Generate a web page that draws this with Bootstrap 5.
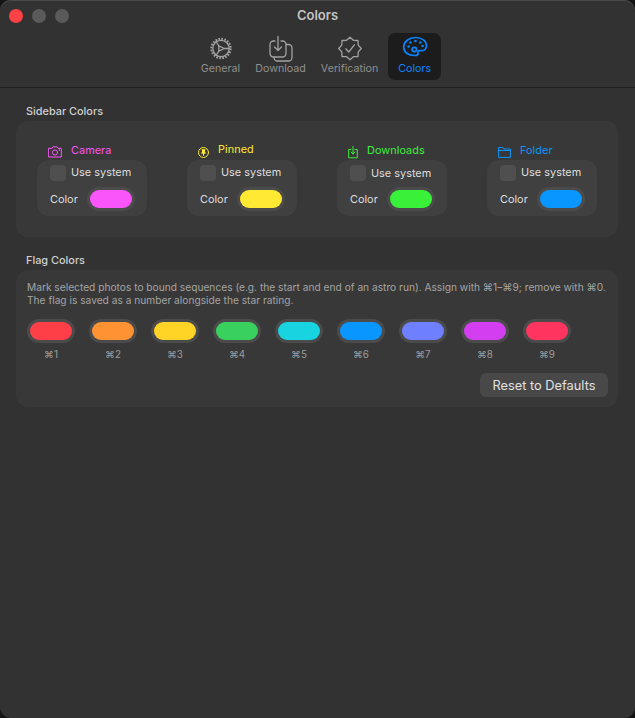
<!DOCTYPE html>
<html lang="en">
<head>
<meta charset="utf-8">
<title>Colors</title>
<link href="https://cdn.jsdelivr.net/npm/bootstrap@5.3.0/dist/css/bootstrap.min.css" rel="stylesheet">
<style>
html,body{height:100%;margin:0;background:#141414;}
body{font-family:"Inter","DejaVu Sans",sans-serif;color:#dcdcdc;overflow:hidden;}
.win{height:718px;background:#323232;border-radius:11px;overflow:hidden;box-shadow:inset 0 1px 0 #4a4a4a;}
.titlebar{display:grid;grid-template-columns:1fr auto 1fr;align-items:center;height:31px;padding:1px 9px 0;}
.lights{gap:9px;}
.light{width:14px;height:14px;border-radius:50%;background:#5a5a5a;}
.light-close{background:#fe4246;}
.win-title{font-size:13px;font-weight:600;color:#c4c4c4;}
.toolbar{height:57px;padding-top:2px;border-bottom:1px solid #212121;gap:1px;}
.tab-item{height:47px;padding:0 7px;font-size:10.7px;color:#8f8f8f;white-space:nowrap;}
.tab-item svg{display:block;height:27px;width:30px;margin:2px 0 -1px;fill:none;stroke:#a2a2a2;stroke-width:1.3;stroke-linecap:round;stroke-linejoin:round;}
.tab-on{background:#1c1c1c;border-radius:7px;padding:0 10px;margin-left:2px;color:#0a84ff;}
.tab-on svg{stroke:#0a84ff;stroke-width:1.7;}
.content-area{padding:0 17px 0 16px;}
.sect-title{font-size:10.9px;font-weight:500;color:#d0d0d0;padding-left:10px;line-height:15px;}
.first-head{margin-top:16px;}
.panel{background:#383838;border-radius:12px;}
.panel-side{margin-top:2px;height:116px;padding:20px 0 0 21px;gap:40px;}
.side-col{width:110px;}
.side-head{height:19px;padding:2px 0 0 11px;gap:9px;font-size:10.8px;letter-spacing:.1px;}
.side-head svg{height:14px;fill:none;stroke:currentColor;stroke-width:1;flex:none;stroke-linecap:round;stroke-linejoin:round;}
.icon-cam{width:14px;}
.icon-pin{width:11px;}
.icon-dl{width:10px;}
.icon-folder{width:13px;}
.lift{padding-bottom:2px;}
.side-box{background:#404040;border-radius:12px;height:56px;padding:5px 13px 0;font-size:10.9px;color:#dedede;}
.use-row{gap:5px;height:16px;line-height:14px;}
.use-word{padding-bottom:2px;}
.use-word-low{padding-bottom:0;}
.form-check-input.chk{width:16px;height:16px;margin:0;background-color:#4f4f4f;border:0;border-radius:4px;flex:none;}
.color-row{margin-top:6px;gap:9px;}
.color-word{padding-top:1px;}
.swatch{display:block;width:48px;height:24px;border-radius:12px;background:#4b4b4b;padding:3px;flex:none;}
.swatch>span{display:block;width:100%;height:100%;border-radius:9px;}
.panel-flag{margin-top:2px;height:137px;padding:11px 10px 0 11px;}
.flag-note{font-size:10.2px;line-height:13px;color:#a4a4a4;margin:0;white-space:nowrap;}
.flag-row{margin-top:12px;gap:14px;}
.flag-item{width:48px;}
.flag-key{font-size:9.8px;line-height:12px;color:#9c9c9c;margin-top:6px;}
.reset{background:#484848;border:0;color:#e2e2e2;font-size:12.8px;line-height:16px;width:128px;height:24px;padding:1px 0 0;border-radius:6px;font-weight:400;}
.reset-row{margin-top:12px;}
.second-head{margin-top:16px;}
</style>
</head>
<body>
<div class="win">
  <div class="titlebar">
    <div class="d-flex lights"><span class="light light-close"></span><span class="light"></span><span class="light"></span></div>
    <div class="win-title">Colors</div>
    <div></div>
  </div>
  <div class="toolbar d-flex justify-content-center align-items-start">
    <div class="tab-item d-flex flex-column align-items-center">
      <svg viewBox="0 0 30 27"><circle cx="15" cy="13.500" r="8.200"/><circle cx="15" cy="13.500" r="9.600" stroke-width="2.200" stroke-dasharray="1.600 1.420" stroke-linecap="butt"/><path d="M12.800 10.800 18.300 13.500 12.800 16.200ZM18.300 13.500H23.200M12.800 10.800 10 6.500M12.800 16.200 10 20.500"/></svg>
      <span>General</span>
    </div>
    <div class="tab-item d-flex flex-column align-items-center">
      <svg viewBox="0 0 30 27"><path d="M9 6H7.500A3.500 3.500 0 0 0 4 9.500V18.500A3.500 3.500 0 0 0 7.500 22H16.500A3.500 3.500 0 0 0 20 18.500V9.500A3.500 3.500 0 0 0 16.500 6H15"/><path d="M12 1.500V15.500M8.500 12 12 15.500 15.500 12"/><path d="M20 9.500H22.500A3.500 3.500 0 0 1 26 13V22.500A3.500 3.500 0 0 1 22.500 26H11.500A3.500 3.500 0 0 1 8 22.500V22"/></svg>
      <span>Download</span>
    </div>
    <div class="tab-item d-flex flex-column align-items-center">
      <svg viewBox="0 0 30 27"><path d="M15 2.200 18.410 5.280 23 5.500 23.220 10.090 26.300 13.500 23.220 16.910 23 21.500 18.410 21.720 15 24.800 11.590 21.720 7 21.500 6.780 16.910 3.700 13.500 6.780 10.090 7 5.500 11.590 5.280Z"/><path d="M10.800 13.700 13.800 17 19.400 9.800"/></svg>
      <span>Verification</span>
    </div>
    <div class="tab-item tab-on d-flex flex-column align-items-center">
      <svg viewBox="0 0 30 27"><path d="M15.500 2.500C22 2.500 26.500 6 26.500 10.700 26.500 14.200 24 16 21 15.600 18.500 15.300 17.500 16.300 18 17.700 18.700 19.500 17.500 20.500 14.500 20.500 8 20.500 3.700 17.300 3.700 12 3.700 6.700 9 2.500 15.500 2.500Z"/><circle cx="14.300" cy="14.500" r="2.200"/><circle cx="8.600" cy="11.500" r="1.300" fill="#0a84ff" stroke="none"/><circle cx="10.500" cy="7.500" r="1.300" fill="#0a84ff" stroke="none"/><circle cx="15.500" cy="6" r="1.300" fill="#0a84ff" stroke="none"/><circle cx="20.300" cy="7.500" r="1.300" fill="#0a84ff" stroke="none"/><circle cx="22.600" cy="11" r="1.300" fill="#0a84ff" stroke="none"/></svg>
      <span>Colors</span>
    </div>
  </div>
  <div class="content-area">
    <div class="sect-title first-head">Sidebar Colors</div>
    <div class="panel panel-side d-flex">
      <div class="side-col">
        <div class="side-head d-flex align-items-center" style="color:#fa55fa">
          <svg class="icon-cam" viewBox="0 0 14 14"><path d="M.7 3.300H4L5 1.800H9L10 3.300H13.300V12H.7Z"/><circle cx="7" cy="7.500" r="2.600"/><circle cx="11.200" cy="5" r=".3"/></svg>
          <span>Camera</span>
        </div>
        <div class="side-box">
          <label class="use-row d-flex align-items-center"><input class="form-check-input chk" type="checkbox"><span class="use-word">Use system</span></label>
          <div class="color-row d-flex align-items-center"><span class="color-word">Color</span><span class="swatch"><span style="background:#fa55fa"></span></span></div>
        </div>
      </div>
      <div class="side-col">
        <div class="side-head d-flex align-items-center" style="color:#ffe933">
          <svg class="icon-pin" viewBox="0 0 11 14"><circle cx="5.500" cy="7.500" r="5"/><path d="M4 4.800H7M4.500 4.800V7L3.500 8.200H7.500L6.500 7V4.800M5.500 8.200V10.500" fill="#ffe933"/></svg>
          <span class="lift">Pinned</span>
        </div>
        <div class="side-box">
          <label class="use-row d-flex align-items-center"><input class="form-check-input chk" type="checkbox"><span class="use-word">Use system</span></label>
          <div class="color-row d-flex align-items-center"><span class="color-word">Color</span><span class="swatch"><span style="background:#ffe933"></span></span></div>
        </div>
      </div>
      <div class="side-col">
        <div class="side-head d-flex align-items-center" style="color:#38f138">
          <svg class="icon-dl" viewBox="0 0 10 14"><path d="M3 4.500H.7V12.800H9.300V4.500H7"/><path d="M5 1.500V9M3 7 5 9 7 7"/></svg>
          <span>Downloads</span>
        </div>
        <div class="side-box">
          <label class="use-row d-flex align-items-center"><input class="form-check-input chk" type="checkbox"><span class="use-word use-word-low">Use system</span></label>
          <div class="color-row d-flex align-items-center"><span class="color-word">Color</span><span class="swatch"><span style="background:#38f138"></span></span></div>
        </div>
      </div>
      <div class="side-col">
        <div class="side-head d-flex align-items-center" style="color:#0a96ff">
          <svg class="icon-folder" viewBox="0 0 13 14"><path d="M.6 12V2.500H4.800L6 4H12.400V12ZM.6 5.500H12.400"/></svg>
          <span>Folder</span>
        </div>
        <div class="side-box">
          <label class="use-row d-flex align-items-center"><input class="form-check-input chk" type="checkbox"><span class="use-word">Use system</span></label>
          <div class="color-row d-flex align-items-center"><span class="color-word">Color</span><span class="swatch"><span style="background:#0a96ff"></span></span></div>
        </div>
      </div>
    </div>
    <div class="sect-title second-head">Flag Colors</div>
    <div class="panel panel-flag">
      <p class="flag-note">Mark selected photos to bound sequences (e.g. the start and end of an astro run). Assign with ⌘1–⌘9; remove with ⌘0.<br>The flag is saved as a number alongside the star rating.</p>
      <div class="flag-row d-flex">
        <div class="flag-item text-center"><span class="swatch"><span style="background:#ff3f48"></span></span><div class="flag-key">⌘1</div></div>
        <div class="flag-item text-center"><span class="swatch"><span style="background:#ff9233"></span></span><div class="flag-key">⌘2</div></div>
        <div class="flag-item text-center"><span class="swatch"><span style="background:#ffd426"></span></span><div class="flag-key">⌘3</div></div>
        <div class="flag-item text-center"><span class="swatch"><span style="background:#3ad05e"></span></span><div class="flag-key">⌘4</div></div>
        <div class="flag-item text-center"><span class="swatch"><span style="background:#18d3e0"></span></span><div class="flag-key">⌘5</div></div>
        <div class="flag-item text-center"><span class="swatch"><span style="background:#0a96ff"></span></span><div class="flag-key">⌘6</div></div>
        <div class="flag-item text-center"><span class="swatch"><span style="background:#6e80ff"></span></span><div class="flag-key">⌘7</div></div>
        <div class="flag-item text-center"><span class="swatch"><span style="background:#d33ff0"></span></span><div class="flag-key">⌘8</div></div>
        <div class="flag-item text-center"><span class="swatch"><span style="background:#ff3560"></span></span><div class="flag-key">⌘9</div></div>
      </div>
      <div class="reset-row d-flex justify-content-end"><button type="button" class="btn reset">Reset to Defaults</button></div>
    </div>
  </div>
</div>
<script src="https://cdn.jsdelivr.net/npm/bootstrap@5.3.0/dist/js/bootstrap.bundle.min.js"></script>
</body>
</html>
